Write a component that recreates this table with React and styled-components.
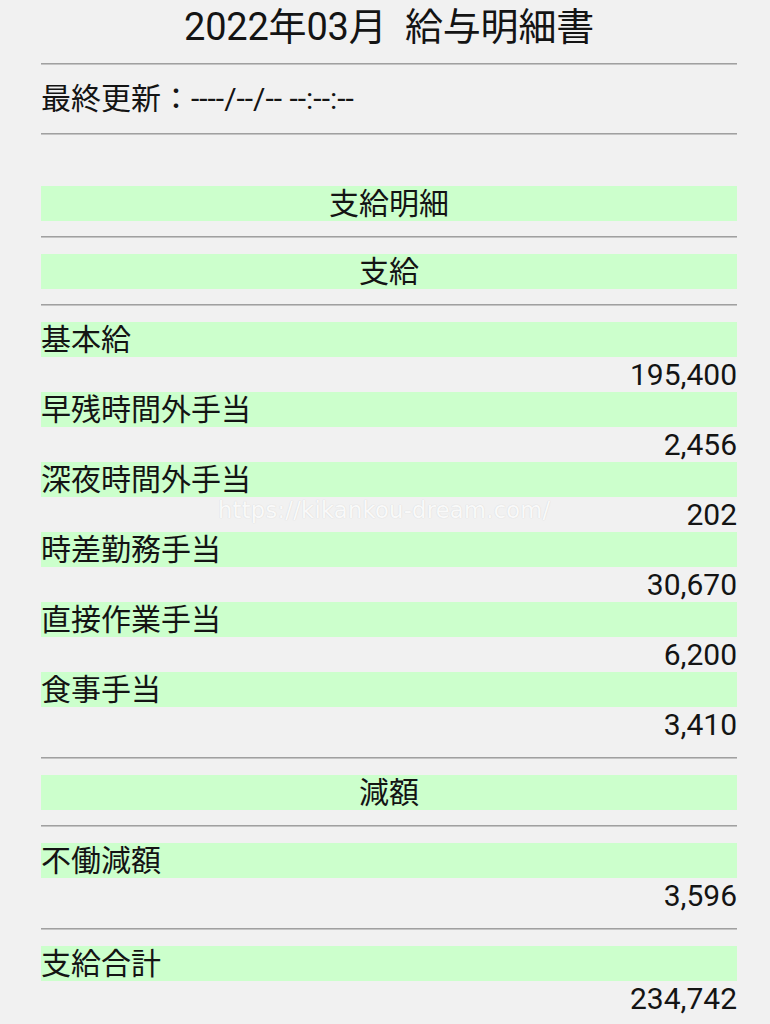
import React from 'react';
import styled, { createGlobalStyle } from 'styled-components';

const GlobalStyle = createGlobalStyle`
  html, body {
    margin: 0;
    padding: 0;
    background: #f1f1f1;
  }
  body {
    font-family: Roboto, "Noto Sans CJK JP", sans-serif;
    color: #141414;
  }
`;

const earnings = [
  { label: '基本給', value: '195,400' },
  { label: '早残時間外手当', value: '2,456' },
  { label: '深夜時間外手当', value: '202' },
  { label: '時差勤務手当', value: '30,670' },
  { label: '直接作業手当', value: '6,200' },
  { label: '食事手当', value: '3,410' },
];

const deductions = [{ label: '不働減額', value: '3,596' }];

const Item = ({ label, value }) => (
  <ItemBlock>
    <Bar>{label}</Bar>
    <Amount>{value}</Amount>
  </ItemBlock>
);

const App = () => (
  <>
    <GlobalStyle />
    <Page>
      <Title>2022年03月{'\u00a0\u00a0'}給与明細書</Title>
      <Rule $top={9} $bottom={0} />
      <Updated>最終更新：----/--/-- --:--:--</Updated>
      <Rule $top={0} $bottom={51} />

      <Bar $center>支給明細</Bar>
      <Rule />
      <Bar $center>支給</Bar>
      <Rule />
      {earnings.map((e) => (
        <Item key={e.label} {...e} />
      ))}
      <Rule />
      <Bar $center>減額</Bar>
      <Rule />
      {deductions.map((d) => (
        <Item key={d.label} {...d} />
      ))}
      <Rule />
      <Item label="支給合計" value="234,742" />

      <Watermark>https://kikankou-dream.com/</Watermark>
    </Page>
  </>
);

const Page = styled.div`
  position: relative;
  width: 696px;
  padding-left: 41px;
  padding-bottom: 40px;
`;

const Title = styled.h1`
  margin: 0;
  font-size: 38px;
  font-weight: 400;
  line-height: 54px;
  height: 54px;
  text-align: center;
  letter-spacing: -0.2px;
`;

const Rule = styled.div`
  height: 1px;
  border-top: 1px solid #a0a0a0;
  background: #c4c4c4;
  margin: ${({ $top = 15 }) => $top}px 0 ${({ $bottom = 16 }) => $bottom}px;
`;

const Updated = styled.div`
  font-size: 30px;
  line-height: 68px;
  height: 68px;
`;

const ItemBlock = styled.div`
  display: flex;
  flex-direction: column;
`;

const Bar = styled.div`
  background: #ccffcc;
  height: 35px;
  line-height: 35px;
  font-size: 30px;
  text-align: ${({ $center }) => ($center ? 'center' : 'left')};
  white-space: nowrap;
`;

const Amount = styled.div`
  height: 35px;
  line-height: 36px;
  font-size: 30px;
  text-align: right;
`;

const Watermark = styled.div`
  position: absolute;
  left: 218px;
  top: 497px;
  font-family: "DejaVu Sans", sans-serif;
  font-size: 22.5px;
  letter-spacing: 0.3px;
  color: rgba(255, 255, 255, 0.9);
  text-shadow: 0 0 1px rgba(190, 190, 190, 0.7);
  pointer-events: none;
`;

export default App;
